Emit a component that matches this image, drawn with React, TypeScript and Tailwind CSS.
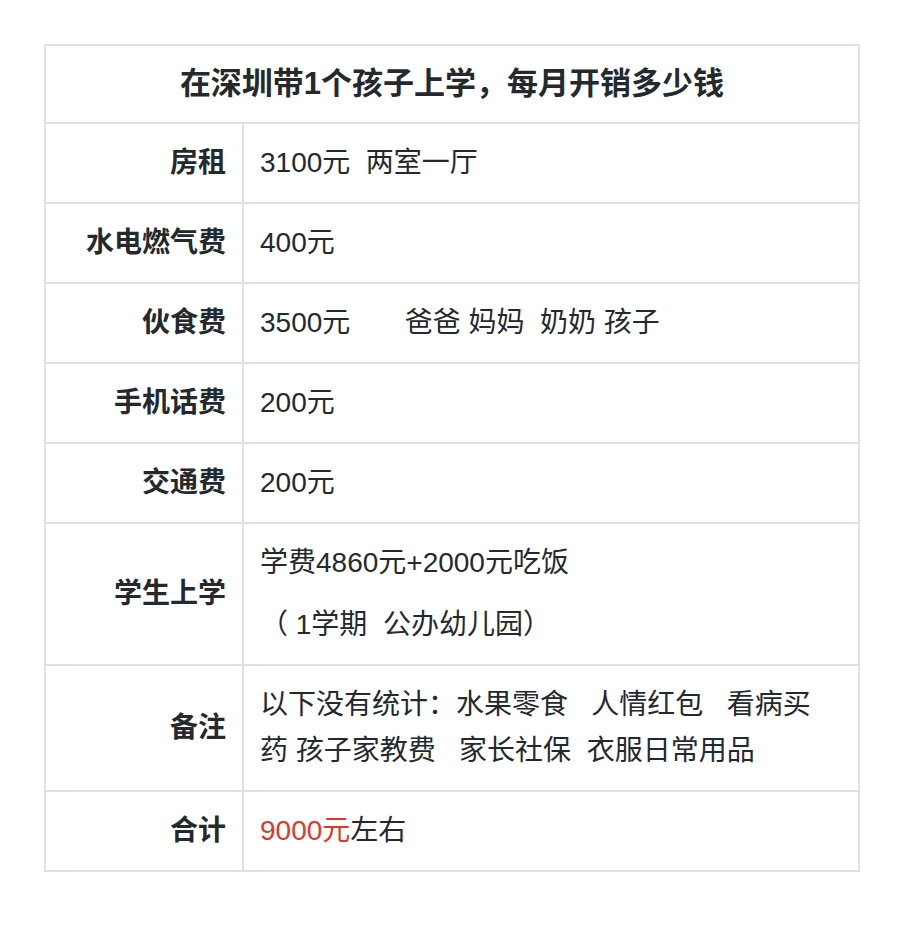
const rows: { label: string; lines: React.ReactNode[] }[] = [
  { label: '房租', lines: ['3100元  两室一厅'] },
  { label: '水电燃气费', lines: ['400元'] },
  { label: '伙食费', lines: ['3500元       爸爸 妈妈  奶奶 孩子'] },
  { label: '手机话费', lines: ['200元'] },
  { label: '交通费', lines: ['200元'] },
  { label: '学生上学', lines: ['学费4860元+2000元吃饭', '（ 1学期  公办幼儿园）'] },
];

export default function App() {
  const cell = 'border-2 border-[#dfe2e5] py-4 text-[28px] leading-[46px]';
  return (
    <div
      className="min-h-[932px] bg-white pt-[44px] pl-[44px] text-[#24292e]"
      style={{ fontFamily: '"Liberation Sans", "Noto Sans CJK SC", sans-serif' }}
    >
      <table className="w-[816px] border-collapse">
        <tbody>
          <tr>
            <th
              colSpan={2}
              className="border-2 border-[#dfe2e5] py-[15px] text-center text-[31px] leading-[46px] font-semibold"
            >
              在深圳带1个孩子上学，每月开销多少钱
            </th>
          </tr>
          {rows.map((r) => (
            <tr key={r.label}>
              <td className={`${cell} w-[198px] pr-[16px] text-right align-middle font-semibold`}>{r.label}</td>
              <td className={`${cell} pl-[16px] pr-4 whitespace-pre-wrap`}>
                <div className="flex flex-col gap-4">
                  {r.lines.map((l, i) => (
                    <p key={i}>{l}</p>
                  ))}
                </div>
              </td>
            </tr>
          ))}
          <tr>
            <td className={`${cell} pr-[16px] text-right align-middle font-semibold`}>备注</td>
            <td className={`${cell} pl-[16px] pr-4 whitespace-pre-wrap`}>
              {'以下没有统计：水果零食   人情红包   看病买'}
              <br />
              {'药 孩子家教费   家长社保  衣服日常用品'}
            </td>
          </tr>
          <tr>
            <td className={`${cell} pr-[16px] text-right align-middle font-semibold`}>合计</td>
            <td className={`${cell} pl-[16px] pr-4`}>
              <span className="text-[#e0372c]">9000元</span>左右
            </td>
          </tr>
        </tbody>
      </table>
    </div>
  );
}
